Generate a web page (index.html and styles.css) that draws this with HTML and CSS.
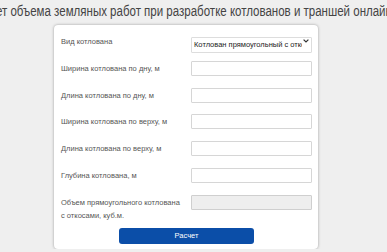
FILE: index.html
```html
<!DOCTYPE html>
<html lang="ru">
<head>
<meta charset="utf-8">
<title>Расчет объема земляных работ</title>
<link rel="stylesheet" href="styles.css">
</head>
<body>
<div class="title-row"><h1 class="title">Расчет объема земляных работ при разработке котлованов и траншей онлайн</h1></div>
<div class="card">
  <div class="row">
    <label class="label">Вид котлована</label>
    <div class="select-wrap">
      <select class="select"><option>Котлован прямоугольный с откосами</option></select>
      <svg class="chev" width="6" height="4" viewBox="0 0 6 4"><path d="M0.6 0.6 L3 3 L5.4 0.6" fill="none" stroke="#333" stroke-width="1.2"/></svg>
    </div>
  </div>
  <div class="row">
    <label class="label">Ширина котлована по дну, м</label>
    <input class="input" type="text">
  </div>
  <div class="row">
    <label class="label">Длина котлована по дну, м</label>
    <input class="input" type="text">
  </div>
  <div class="row">
    <label class="label">Ширина котлована по верху, м</label>
    <input class="input" type="text">
  </div>
  <div class="row">
    <label class="label">Длина котлована по верху, м</label>
    <input class="input" type="text">
  </div>
  <div class="row">
    <label class="label">Глубина котлована, м</label>
    <input class="input" type="text">
  </div>
  <div class="row">
    <label class="label">Объем прямоугольного котлована с откосами, куб.м.</label>
    <input class="input disabled" type="text" disabled>
  </div>
  <div class="btn-row"><button class="btn">Расчет</button></div>
</div>
</body>
</html>
```
FILE: styles.css
```css
html, body {
  margin: 0;
  padding: 0;
  background: #efefef;
  font-family: "Liberation Sans", Arial, sans-serif;
  overflow: hidden;
}
.title-row {
  display: flex;
  justify-content: center;
  overflow: hidden;
  height: 25px;
}
.title {
  margin: 0;
  flex: none;
  white-space: nowrap;
  font-size: 14px;
  line-height: 22px;
  font-weight: normal;
  color: #444;
  position: relative;
  left: -12.5px;
  transform: scaleX(0.822);
}
.card {
  margin-left: 54px;
  width: 264px;
  box-sizing: border-box;
  background: #fff;
  border-radius: 4px;
  box-shadow: 0 0 3px rgba(0,0,0,0.35);
  padding: 8px 6px 5px 7px;
  display: flex;
  flex-direction: column;
  gap: 11.8px;
}
.row {
  display: grid;
  grid-template-columns: 130px 121px;
  align-items: start;
}
.label {
  font-size: 7.5px;
  line-height: 13px;
  color: #555;
  padding-top: 1px;
  padding-right: 8px;
}
.row:first-child .label { padding-top: 2px; }
.select-wrap {
  position: relative;
  height: 16px;
}
.select {
  appearance: none;
  -webkit-appearance: none;
  width: 100%;
  height: 16px;
  box-sizing: border-box;
  border: 1px solid #ddd;
  border-radius: 1px;
  background: #fff;
  font-family: "Liberation Sans", Arial, sans-serif;
  font-size: 7.5px;
  color: #222;
  padding: 0 9px 0 2px;
  margin: 0;
}
.chev {
  position: absolute;
  right: 3px;
  top: 6px;
}
.input {
  width: 100%;
  height: 15px;
  box-sizing: border-box;
  border: 1px solid #d6d6d6;
  border-radius: 1px;
  background: #fff;
  margin: 0;
  padding: 0 3px;
  font-size: 7.5px;
}
.input.disabled {
  background: #eeeeee;
  border-color: #cfcfcf;
}
.btn-row {
  display: flex;
  justify-content: center;
  margin-top: -6px;
}
.btn {
  width: 135px;
  height: 16px;
  border: none;
  border-radius: 3px;
  background: #0b4ea8;
  color: #fff;
  font-family: "Liberation Sans", Arial, sans-serif;
  font-size: 7.5px;
  padding: 0;
  margin: 0;
}
```
